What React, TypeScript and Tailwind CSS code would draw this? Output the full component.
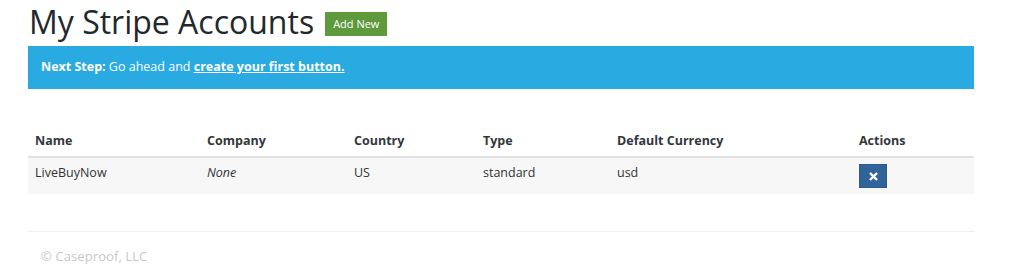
import React from "react";

const columns = ["Name", "Company", "Country", "Type", "Default Currency", "Actions"];
const widths = ["w-[172px]", "w-[147px]", "w-[129px]", "w-[134px]", "w-[242px]", ""];

const App: React.FC = () => {
  return (
    <div className="w-[1024px] h-[273px] bg-white font-['Open_Sans',sans-serif] text-[12.5px] text-[#333]">
      <div className="ml-[28px] w-[946px]">
        <div className="flex items-center h-[46px] pb-[2px]">
          <h1 className="text-[32px] leading-[40px] text-[#23282d] font-normal ml-[1px]">
            My Stripe Accounts
          </h1>
          <button className="ml-[11px] mt-[4px] h-[24px] px-[8px] bg-[#5e993c] text-white text-[11px] leading-[24px]">
            Add New
          </button>
        </div>

        <div className="h-[43px] bg-[#29abe2] text-white flex items-center px-[13px]">
          <span>
            <strong className="font-bold">Next Step:</strong> Go ahead and{" "}
            <a href="#" className="font-bold underline">
              create your first button.
            </a>
          </span>
        </div>

        <table className="mt-[33px] w-full border-collapse text-left">
          <thead>
            <tr className="border-b-2 border-[#e1e1e1]">
              {columns.map((c, i) => (
                <th
                  key={c}
                  className={"px-[7px] pt-[10px] pb-[6px] leading-[18px] font-bold text-[#32373c] " + widths[i]}
                >
                  {c}
                </th>
              ))}
            </tr>
          </thead>
          <tbody>
            <tr className="bg-[#f7f7f7]">
              <td className="px-[7px] pt-[6px] pb-[12px] leading-[18px]">LiveBuyNow</td>
              <td className="px-[7px] pt-[6px] pb-[12px] leading-[18px] italic">None</td>
              <td className="px-[7px] pt-[6px] pb-[12px] leading-[18px]">US</td>
              <td className="px-[7px] pt-[6px] pb-[12px] leading-[18px]">standard</td>
              <td className="px-[7px] pt-[6px] pb-[12px] leading-[18px]">usd</td>
              <td className="px-[7px] py-[6px] leading-[18px]">
                <button className="w-[28px] h-[24px] bg-[#2f6399] border border-[#2a5a8c] flex items-center justify-center">
                  <svg width="9" height="9" viewBox="0 0 10 10">
                    <path d="M2 2 L8 8 M8 2 L2 8" stroke="white" strokeWidth="2.6" strokeLinecap="square" />
                  </svg>
                </button>
              </td>
            </tr>
          </tbody>
        </table>

        <div className="mt-[37px] border-t border-[#eee] pt-[13px] pl-[13px] text-[#c8c8c8] text-[13.2px] leading-[22px]">
          © Caseproof, LLC
        </div>
      </div>
    </div>
  );
};

export default App;
